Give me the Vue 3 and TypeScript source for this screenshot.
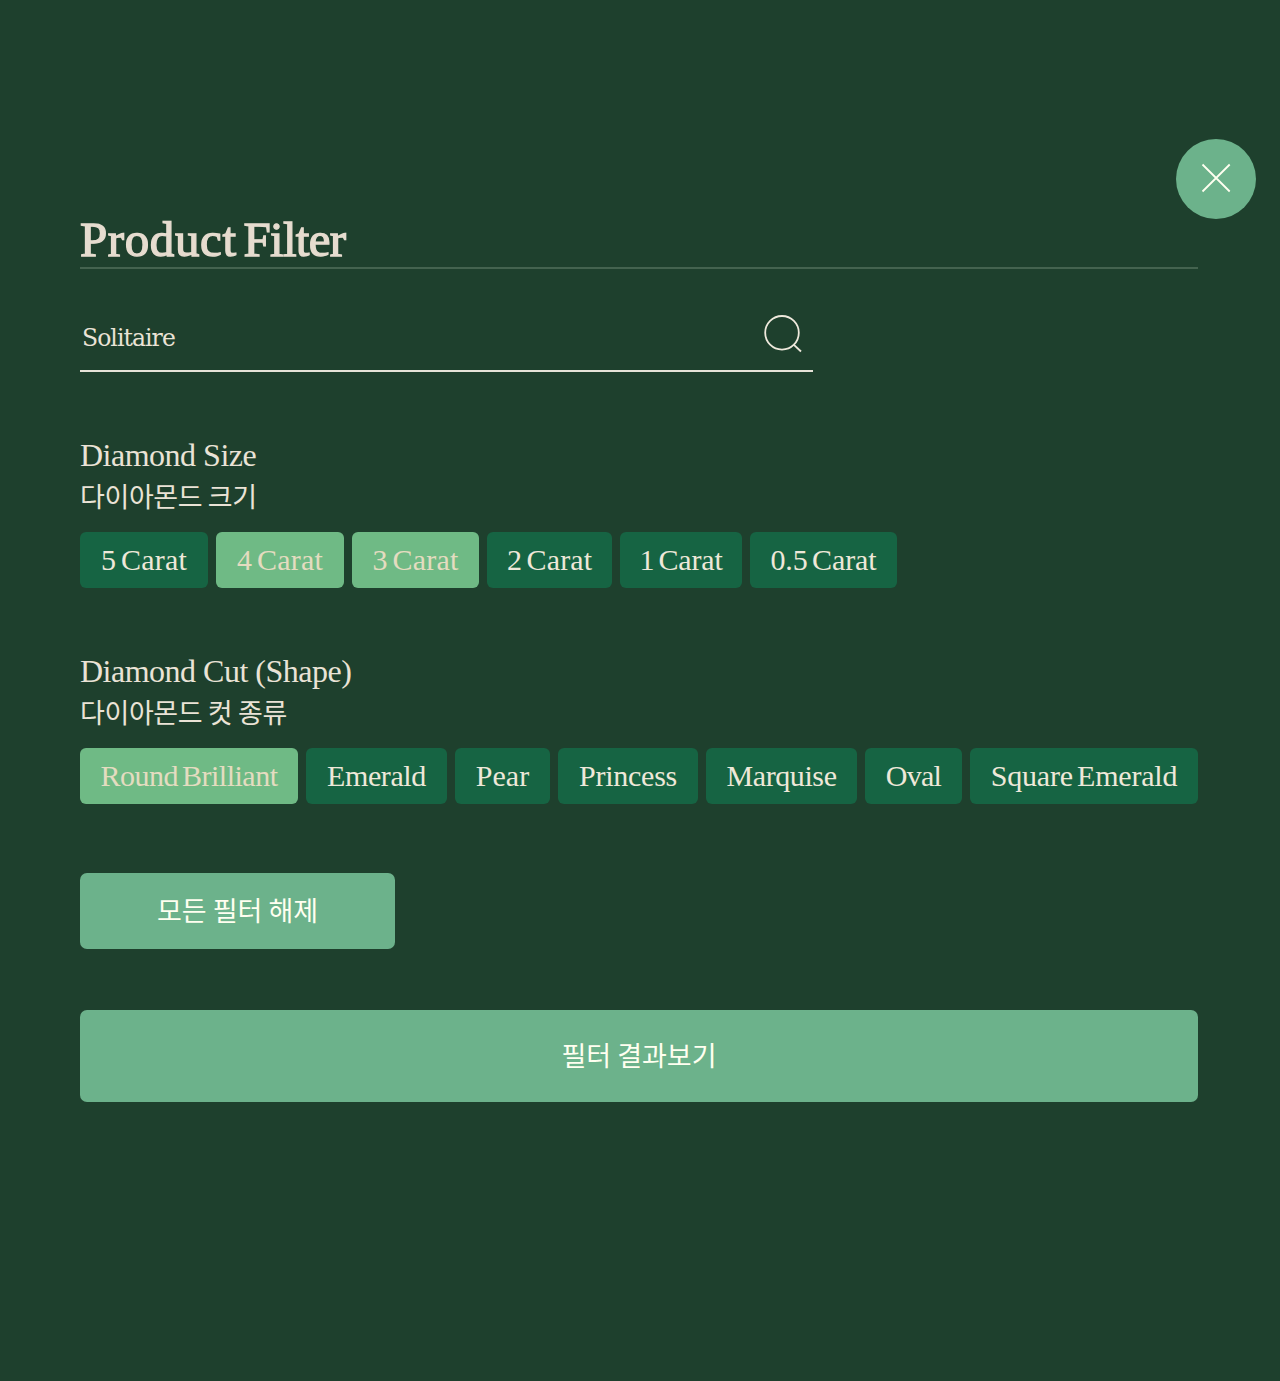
<script setup lang="ts">
import { ref } from 'vue'

interface Option {
  label: string
  width: number
  tracking: number
  selected: boolean
}

interface Group {
  id: string
  title: string
  subtitle: string
  options: Option[]
}

const query = ref('Solitaire')

const groups = ref<Group[]>([
  {
    id: 'size',
    title: 'Diamond Size',
    subtitle: '다이아몬드 크기',
    options: [
      { label: '5 Carat', width: 128, tracking: 0.2, selected: false },
      { label: '4 Carat', width: 128, tracking: 0.2, selected: true },
      { label: '3 Carat', width: 127, tracking: 0.2, selected: true },
      { label: '2 Carat', width: 125, tracking: 0.1, selected: false },
      { label: '1 Carat', width: 122, tracking: -0.2, selected: false },
      { label: '0.5 Carat', width: 147, tracking: -0.1, selected: false },
    ],
  },
  {
    id: 'cut',
    title: 'Diamond Cut (Shape)',
    subtitle: '다이아몬드 컷 종류',
    options: [
      { label: 'Round Brilliant', width: 218, tracking: -0.5, selected: true },
      { label: 'Emerald', width: 141, tracking: -0.4, selected: false },
      { label: 'Pear', width: 95, tracking: 0, selected: false },
      { label: 'Princess', width: 140, tracking: -0.25, selected: false },
      { label: 'Marquise', width: 151, tracking: -0.4, selected: false },
      { label: 'Oval', width: 97, tracking: -0.7, selected: false },
      { label: 'Square Emerald', width: 228, tracking: -0.22, selected: false },
    ],
  },
])

function clearAll(): void {
  for (const group of groups.value) {
    for (const option of group.options) option.selected = false
  }
}
</script>

<template>
  <main class="panel">
    <div class="top">
      <button class="close" type="button" aria-label="Close">
        <svg width="80" height="80" viewBox="0 0 80 80" fill="none">
          <path d="M26.5 25.5 53.7 52.5M53.7 25.5 26.5 52.5" stroke="#fffff0" stroke-width="1.8" />
        </svg>
      </button>
    </div>

    <h1 class="title">Product <span>Filter</span></h1>

    <div class="search">
      <span class="query">{{ query }}</span>
      <svg class="glass" width="40" height="42" viewBox="0 0 40 42" fill="none" stroke="#eee9dc" stroke-width="1.8">
        <circle cx="20" cy="18.8" r="16.8" />
        <path d="M31.4 30.3 39 37.5" />
      </svg>
    </div>

    <section v-for="group in groups" :key="group.id" class="group">
      <h2>{{ group.title }}</h2>
      <p>{{ group.subtitle }}</p>
      <div class="options">
        <button
          v-for="option in group.options"
          :key="option.label"
          type="button"
          class="chip"
          :class="{ selected: option.selected }"
          :style="{ width: option.width + 'px', letterSpacing: option.tracking + 'px' }"
          @click="option.selected = !option.selected"
        >
          {{ option.label }}
        </button>
      </div>
    </section>

    <button class="action clear" type="button" @click="clearAll">모든 필터 해제</button>
    <button class="action apply" type="button">필터 결과보기</button>
  </main>
</template>

<style>
body {
  margin: 0;
  background: #1e402d;
}
</style>

<style scoped>
.panel {
  box-sizing: border-box;
  width: 1280px;
  height: 1381px;
  padding: 139px 82px 0 80px;
  background: #1e402d;
  color: #eae3d6;
  font-family: 'Liberation Serif', 'Noto Sans CJK KR', serif;
}

button {
  padding: 0;
  border: 0;
  font-family: inherit;
  cursor: pointer;
}

.top {
  display: flex;
  justify-content: flex-end;
  height: 80px;
  margin-right: -58px;
}

.close {
  width: 80px;
  height: 80px;
  border-radius: 50%;
  background: #6cb28b;
}

.close svg {
  display: block;
}

.title {
  box-sizing: border-box;
  height: 50px;
  margin: 0;
  border-bottom: 2px solid #44634f;
  color: #e6dccf;
  font-size: 49px;
  font-weight: 400;
  line-height: 41px;
  letter-spacing: 0.6px;
  word-spacing: -6px;
  white-space: nowrap;
  -webkit-text-stroke: 1.3px #e6dccf;
}

.title span {
  letter-spacing: -0.7px;
}

.search {
  display: flex;
  justify-content: space-between;
  box-sizing: border-box;
  width: 733px;
  height: 58px;
  margin-top: 45px;
  padding: 0 11px 0 2px;
  border-bottom: 2px solid #e6e3d8;
}

.query {
  font-family: 'DejaVu Serif', serif;
  font-size: 23.5px;
  line-height: 48px;
  letter-spacing: -0.95px;
}

.group {
  margin-top: 63px;
}

h2 {
  height: 42px;
  margin: 0;
  font-size: 32px;
  font-weight: 400;
  line-height: 40px;
  letter-spacing: -0.5px;
}

p {
  height: 42px;
  margin: 0 0 13px;
  font-family: 'Noto Sans CJK KR', sans-serif;
  font-size: 27px;
  font-weight: 400;
  line-height: 38px;
  letter-spacing: -0.4px;
}

.options {
  display: flex;
  gap: 8px;
}

.chip {
  height: 56px;
  padding-bottom: 1px;
  border-radius: 6px;
  background: #166443;
  color: #eee8d9;
  font-size: 30px;
  word-spacing: -3px;
  white-space: nowrap;
}

.chip.selected {
  background: #6fba85;
  color: #e4dcc0;
}

.action {
  display: block;
  padding-bottom: 4px;
  border-radius: 7px;
  background: #6cb28b;
  color: #fffff0;
  font-family: 'Noto Sans CJK KR', sans-serif;
  font-size: 27px;
  font-weight: 400;
}

.clear {
  width: 315px;
  height: 76px;
  margin-top: 69px;
}

.apply {
  width: 1118px;
  height: 92px;
  margin-top: 61px;
}
</style>
